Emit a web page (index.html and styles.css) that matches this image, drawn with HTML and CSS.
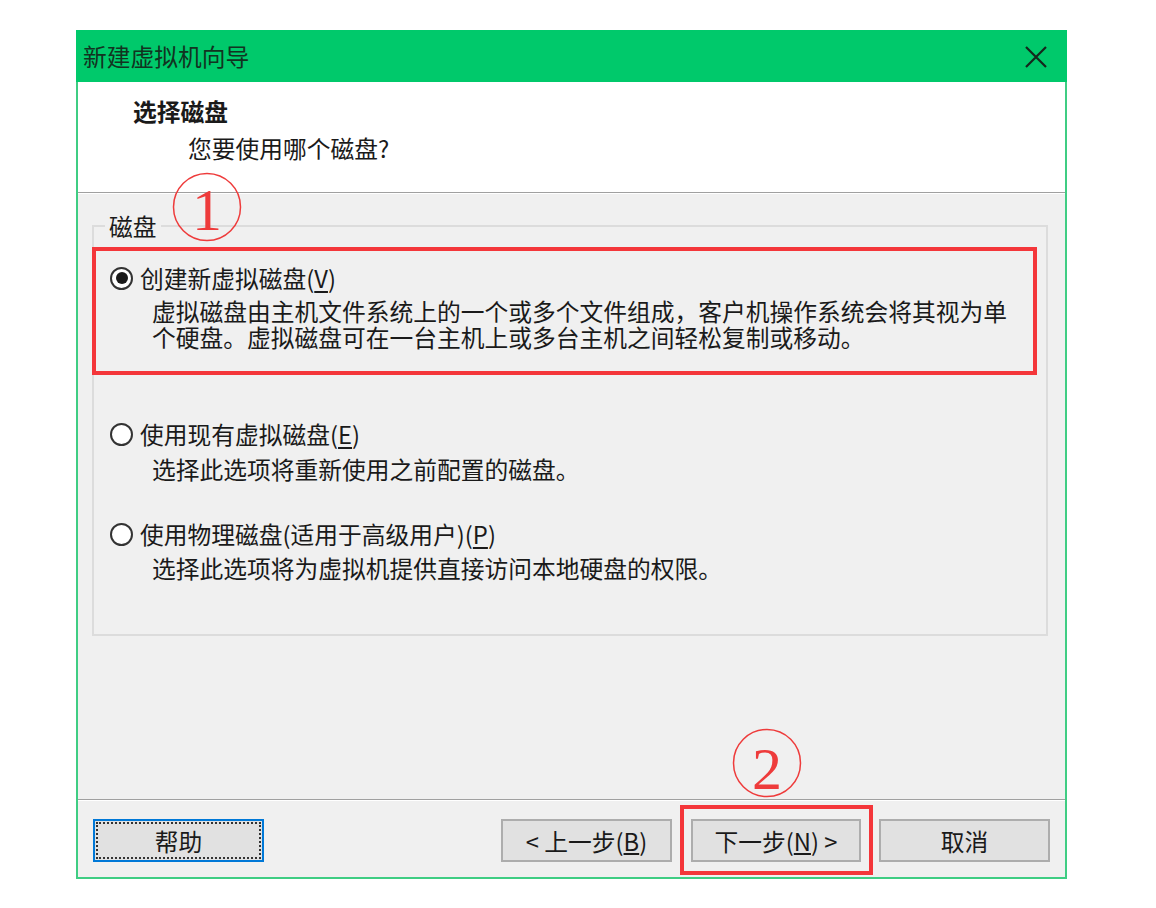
FILE: index.html
```html
<!DOCTYPE html>
<html lang="zh-CN">
  <head>
    <meta charset="UTF-8" />
    <meta name="viewport" content="width=device-width, initial-scale=1.0" />
    <title>新建虚拟机向导</title>
    <link rel="stylesheet" href="styles.css">
  </head>
  <body>
    <div class="window">
      <!-- Title bar -->
      <div class="titlebar">
        <span class="title">新建虚拟机向导</span>
        <svg class="close" width="22" height="22" viewBox="0 0 22 22">
          <path d="M1 1L21 21M21 1L1 21" />
        </svg>
      </div>

      <!-- Page header -->
      <div class="header">
        <div class="heading">选择磁盘</div>
        <div class="subheading">您要使用哪个磁盘?</div>
      </div>

      <div class="content">
        <fieldset class="group">
          <legend>磁盘</legend>

          <div class="option highlight">
            <label class="option-label"><span class="radio checked"></span>创建新虚拟磁盘(<u>V</u>)</label>
            <p class="option-desc">虚拟磁盘由主机文件系统上的一个或多个文件组成，客户机操作系统会将其视为单<br>个硬盘。虚拟磁盘可在一台主机上或多台主机之间轻松复制或移动。</p>
          </div>

          <div class="option option-second">
            <label class="option-label"><span class="radio"></span>使用现有虚拟磁盘(<u>E</u>)</label>
            <p class="option-desc">选择此选项将重新使用之前配置的磁盘。</p>
          </div>

          <div class="option option-third">
            <label class="option-label"><span class="radio"></span>使用物理磁盘(适用于高级用户)(<u>P</u>)</label>
            <p class="option-desc">选择此选项将为虚拟机提供直接访问本地硬盘的权限。</p>
          </div>
        </fieldset>
      </div>

      <!-- Buttons -->
      <div class="footer">
        <button class="btn btn-focus">帮助</button>
        <div class="spacer"></div>
        <button class="btn">&lt; 上一步(<u>B</u>)</button>
        <div class="next-wrap"><button class="btn">下一步(<u>N</u>) &gt;</button></div>
        <button class="btn">取消</button>
      </div>

      <!-- Annotation marks -->
      <svg class="mark mark-one" width="70" height="70" viewBox="0 0 70 70">
        <circle cx="35" cy="35" r="33.5" />
        <text x="35" y="58">1</text>
      </svg>
      <svg class="mark mark-two" width="70" height="70" viewBox="0 0 70 70">
        <circle cx="35" cy="35" r="33.5" />
        <text x="35" y="61">2</text>
      </svg>
    </div>
  </body>
</html>
```

FILE: styles.css
```css
body {
  margin: 0;
  padding: 30px 0 0 76px;
  background-color: #fff;
  font-family: "Noto Sans CJK SC", "Microsoft YaHei", sans-serif;
  font-size: 23.75px;
  line-height: 26px;
  color: #1a1a1a;
}
.window {
  position: relative;
  width: 991px;
  box-sizing: border-box;
  border: 2px solid #3fcd83;
  border-top: none;
  background-color: #f0f0f0;
}
.titlebar {
  height: 52px;
  margin: 0 -2px;
  padding: 0 20px 0 7px;
  display: flex;
  align-items: center;
  justify-content: space-between;
  background-color: #00c96b;
}
.title {
  color: #123321;
}
.close {
  margin-top: 1px;
}
.close path {
  stroke: #15261c;
  stroke-width: 2.2;
  fill: none;
}
.header {
  height: 111px;
  box-sizing: border-box;
  padding: 16px 0 0 55px;
  background-color: #fff;
  border-bottom: 1px solid #a0a0a0;
}
.heading {
  font-weight: bold;
}
.subheading {
  margin-top: 11px;
  padding-left: 55px;
}
.content {
  height: 607px;
  box-sizing: border-box;
  padding: 19px 17px 0 14px;
  border-top: 1px solid #fff;
  border-bottom: 1px solid #a0a0a0;
}
.group {
  margin: 0;
  padding: 8px 0 53px;
  border: 2px solid #dcdcdc;
  min-width: 0;
}
.group legend {
  margin-left: 11px;
  padding: 0 4px;
}
.option {
  padding-left: 16px;
}
.option-label {
  display: flex;
  align-items: center;
}
.option-label u {
  text-underline-offset: 3px;
}
.option-desc {
  margin: 8px 0 0;
  padding-left: 42px;
}
.highlight {
  margin: 0 9px 0 -2px;
  padding: 14px 0 21px 14px;
  border: 4px solid #f4363a;
}
.highlight .option-desc {
  margin-top: 7px;
}
.option-second {
  margin-top: 46px;
}
.option-second .option-desc {
  margin-top: 9px;
}
.option-third {
  margin-top: 39px;
}
.radio {
  width: 23px;
  height: 23px;
  box-sizing: border-box;
  margin-right: 7px;
  border: 2px solid #333;
  border-radius: 50%;
  background-color: #fff;
  display: flex;
  align-items: center;
  justify-content: center;
  flex-shrink: 0;
}
.radio.checked::after {
  content: "";
  width: 12px;
  height: 12px;
  border-radius: 50%;
  background-color: #1a1a1a;
}
.footer {
  height: 77px;
  box-sizing: border-box;
  padding: 18px 15px 0 15px;
  border-top: 1px solid #fff;
  display: flex;
  align-items: flex-start;
}
.spacer {
  flex: 1;
}
.btn {
  width: 171px;
  height: 43px;
  padding: 0;
  font-family: inherit;
  font-size: 23.75px;
  color: #1a1a1a;
  background-color: #e1e1e1;
  border: 2px solid #adadad;
}
.btn-focus {
  border-color: #0078d7;
  outline: 2px dotted #333;
  outline-offset: -5px;
}
.next-wrap {
  position: relative;
  margin: 0 18px 0 19px;
}
.next-wrap .btn {
  width: 170px;
  display: block;
}
.next-wrap::after {
  content: "";
  position: absolute;
  top: -14px;
  bottom: -13px;
  left: -11px;
  right: -12px;
  border: 4px solid #f4363a;
  pointer-events: none;
}
.mark {
  position: absolute;
  overflow: visible;
}
.mark circle {
  fill: none;
  stroke: #ee3b3b;
  stroke-width: 1.5;
}
.mark text {
  font-family: "Liberation Serif", serif;
  font-size: 60px;
  fill: #ee3b3b;
  text-anchor: middle;
}
.mark-one {
  left: 94px;
  top: 142px;
}
.mark-two {
  left: 654px;
  top: 698px;
}
```
